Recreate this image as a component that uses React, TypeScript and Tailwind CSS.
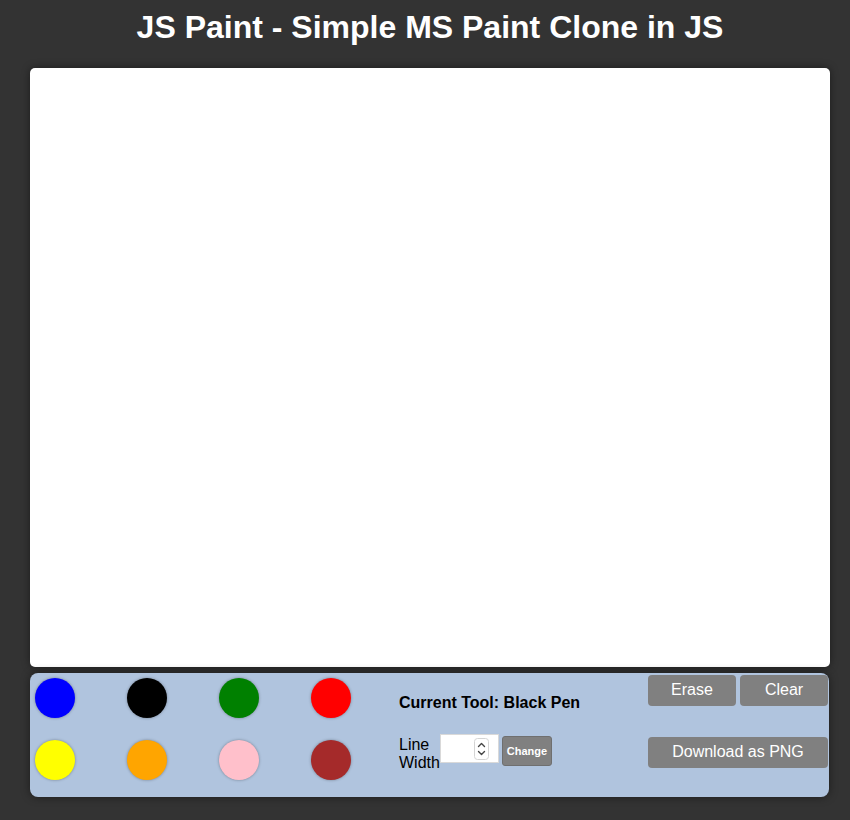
const colors = [
  ["#0000ff", "#000000", "#008000", "#ff0000"],
  ["#ffff00", "#ffa500", "#ffc0cb", "#a52a2a"],
];

function Spinner() {
  return (
    <svg width="15" height="22" viewBox="0 0 15 22" fill="none" className="shrink-0">
      <rect x="0.5" y="0.5" width="14" height="21" rx="3" stroke="#d4d4d4" />
      <path d="M4.5 8.5 L7.5 5.5 L10.5 8.5" stroke="#444" strokeWidth="1.4" strokeLinecap="round" strokeLinejoin="round" />
      <path d="M4.5 13.5 L7.5 16.5 L10.5 13.5" stroke="#444" strokeWidth="1.4" strokeLinecap="round" strokeLinejoin="round" />
    </svg>
  );
}

export default function App() {
  return (
    <div className="min-h-screen bg-[#333333] font-['Liberation_Sans',Arial,Helvetica,sans-serif] pb-6">
      <h1 className="text-center text-white font-bold text-[32px] leading-[37px] pt-[9px] pl-[10px]">
        JS Paint - Simple MS Paint Clone in JS
      </h1>

      <div className="ml-[30px] mt-[22px] w-[800px] h-[599px] bg-white rounded-[5px] shadow-[0_0_8px_rgba(0,0,0,0.45)]" />

      <div className="ml-[30px] mt-[6px] w-[799px] h-[124px] bg-[#b0c4de] rounded-[8px] shadow-[0_0_10px_rgba(0,0,0,0.45)] flex items-start pl-[5px]">
        <div className="flex flex-col gap-[22px] pt-[5px]">
          {colors.map((row, i) => (
            <div key={i} className="flex gap-[52px]">
              {row.map((c) => (
                <div
                  key={c}
                  className="w-10 h-10 rounded-full shadow-[0_0_3px_rgba(0,0,0,0.35)]"
                  style={{ backgroundColor: c }}
                />
              ))}
            </div>
          ))}
        </div>

        <div className="ml-[48px] w-[249px] flex flex-col pt-[21px]">
          <p className="text-base leading-[18px] font-bold text-black">Current Tool: Black Pen</p>
          <div className="flex items-start mt-[22px]">
            <label className="text-base leading-[18px] text-black mt-[2px]">
              Line
              <br />
              Width
            </label>
            <div className="w-[59px] h-[29px] bg-white border border-[#d9d9d9] flex items-center justify-end pr-[9px]">
              <Spinner />
            </div>
            <button className="ml-[3px] mt-[2px] w-[50px] h-[30px] bg-[#808080] border border-[#6f6f6f] rounded-[3px] text-white text-[11px] font-bold">
              Change
            </button>
          </div>
        </div>

        <div className="w-[180px] flex flex-col pt-[2px]">
          <div className="flex gap-[4px]">
            <button className="w-[88px] h-[31px] bg-[#808080] rounded-[4px] text-white text-base pb-[2px]">Erase</button>
            <button className="w-[88px] h-[31px] bg-[#808080] rounded-[4px] text-white text-base pb-[2px]">Clear</button>
          </div>
          <button className="mt-[31px] w-[180px] h-[31px] bg-[#808080] rounded-[4px] text-white text-base pb-[2px]">
            Download as PNG
          </button>
        </div>
      </div>
    </div>
  );
}
